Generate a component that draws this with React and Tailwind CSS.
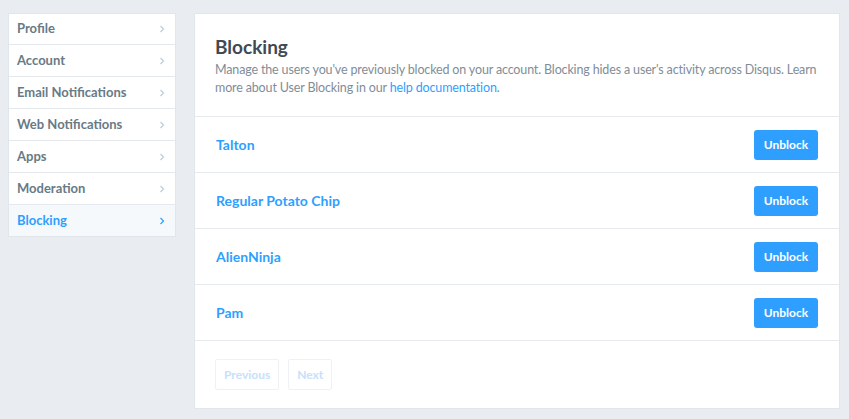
import React from 'react'

const navItems = ['Profile', 'Account', 'Email Notifications', 'Web Notifications', 'Apps', 'Moderation', 'Blocking']
const blocked = ['Talton', 'Regular Potato Chip', 'AlienNinja', 'Pam']

function Chevron({ className }) {
  return (
    <svg width="6" height="8" viewBox="0 0 6 8" className={className}>
      <path d="M1.5 1 L4.5 4 L1.5 7" fill="none" stroke="currentColor" strokeWidth="1.2" />
    </svg>
  )
}

export default function App() {
  return (
    <div
      className="min-h-[419px] bg-[#e9edf1] flex items-start gap-[18px] pl-2 pr-[9px] pt-[13px] pb-[10px]"
      style={{ fontFamily: 'Lato, "Noto Sans", sans-serif' }}
    >
      {/* Settings nav */}
      <nav className="w-[168px] shrink-0 bg-white border border-[#e1e6eb]">
        {navItems.map((item) => {
          const active = item === 'Blocking'
          return (
            <a
              key={item}
              href="#"
              className={`flex items-center justify-between h-[32px] first:h-[31px] pl-2 pr-[10px] text-[13px] font-bold border-b border-[#e5e9ee] last:border-b-0 last:h-[31px] ${
                active ? 'bg-[#f6f9fc] text-[#2e9fff]' : 'text-[#687a86]'
              }`}
            >
              <span>{item}</span>
              <Chevron className={active ? 'text-[#2e9fff]' : 'text-[#c2ccd3]'} />
            </a>
          )
        })}
      </nav>

      {/* Blocking panel */}
      <section className="flex-1 bg-white border border-[#e1e6eb] h-[396px]">
        <div className="px-5 pt-[21px] pb-[19px] border-b border-[#e7ebef]">
          <h1 className="text-[19px] font-bold text-[#3f4a53] leading-6">Blocking</h1>
          <p className="text-[12.5px] tracking-[-0.15px] leading-[18px] text-[#7f8d98] mt-[2px]">
            Manage the users you've previously blocked on your account. Blocking hides a user's activity across Disqus. Learn
            more about User Blocking in our{' '}
            <a href="#" className="text-[#2e9fff]">help documentation</a>.
          </p>
        </div>

        {blocked.map((name) => (
          <div key={name} className="flex items-center justify-between h-[56px] px-[21px] border-b border-[#e7ebef]">
            <a href="#" className="text-[14px] font-bold text-[#2e9fff]">{name}</a>
            <button className="h-[30px] w-[64px] rounded-[3px] bg-[#2e9fff] text-white text-[12px] font-bold">
              Unblock
            </button>
          </div>
        ))}

        <div className="flex gap-[9px] px-5 pt-[18px]">
          <button className="h-[31px] px-[8px] border border-[#eef2f6] rounded-[2px] text-[12px] font-bold text-[#c6e1fb]">
            Previous
          </button>
          <button className="h-[31px] px-[8px] border border-[#eef2f6] rounded-[2px] text-[12px] font-bold text-[#c6e1fb]">
            Next
          </button>
        </div>
      </section>
    </div>
  )
}
